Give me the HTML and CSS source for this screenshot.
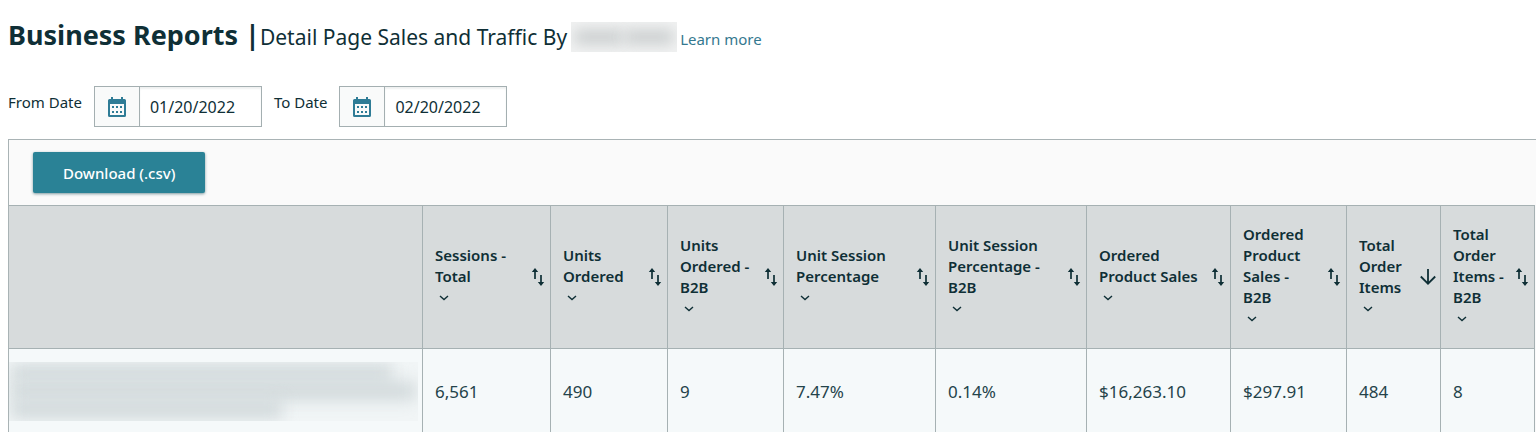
FILE: index.html
```html
<!DOCTYPE html>
<html lang="en">
<head>
<meta charset="utf-8">
<title>Business Reports</title>
<link rel="stylesheet" href="styles.css">
</head>
<body>
<svg class="sprite" aria-hidden="true">
  <symbol id="calendar" viewBox="0 0 20 22">
    <path fill="currentColor" fill-rule="evenodd" d="M4 1h2v2h8V1h2v2h1.500a1.500 1.500 0 0 1 1.500 1.500v15a1.500 1.500 0 0 1-1.500 1.500h-15A1.500 1.500 0 0 1 1 19.500v-15A1.500 1.500 0 0 1 2.500 3H4zM3 8v11h14V8z"/>
    <path fill="currentColor" d="M5 10h2v2H5zM9 10h2v2H9zM13 10h2v2h-2zM5 15h2v2H5zM9 15h2v2H9zM13 15h2v2h-2z"/>
  </symbol>
  <symbol id="sort" viewBox="0 0 14 18">
    <path fill="none" stroke="currentColor" stroke-width="1.700" d="M4 11V2M10 7v9"/>
    <path fill="currentColor" d="M4 0 7.200 4H.8zM10 18l3.200-4H6.800z"/>
  </symbol>
  <symbol id="down" viewBox="0 0 16 16">
    <path fill="none" stroke="currentColor" stroke-width="1.800" d="M8 0v14.500M.8 7.500 8 14.700l7.200-7.200"/>
  </symbol>
  <symbol id="chevron" viewBox="0 0 10 6">
    <path fill="none" stroke="currentColor" stroke-width="1.400" d="M1 1l4 3.600L9 1"/>
  </symbol>
</svg>
<header class="page-head">
  <h1 class="title">Business Reports |</h1>
  <h2 class="subtitle">Detail Page Sales and Traffic By</h2>
  <span class="redacted redacted-title"><i class="smudge"></i><i class="smudge"></i></span>
  <a class="learn" href="#">Learn more</a>
</header>
<form class="filters">
  <label class="filter-label" for="from">From Date</label>
  <div class="date">
    <button class="date-button" type="button" aria-label="Choose from date"><svg class="calendar"><use href="#calendar"/></svg></button>
    <input class="date-input" id="from" type="text" value="01/20/2022">
  </div>
  <label class="filter-label" for="to">To Date</label>
  <div class="date">
    <button class="date-button" type="button" aria-label="Choose to date"><svg class="calendar"><use href="#calendar"/></svg></button>
    <input class="date-input" id="to" type="text" value="02/20/2022">
  </div>
</form>
<main class="panel">
  <div class="toolbar"><button class="download" type="button">Download (.csv)</button></div>
  <table class="report">
    <colgroup>
      <col class="c-name"><col class="c-sessions"><col class="c-units"><col class="c-units-b2b"><col class="c-percent"><col class="c-percent-b2b"><col class="c-sales"><col class="c-sales-b2b"><col class="c-items"><col class="c-items">
    </colgroup>
    <thead>
      <tr>
        <th></th>
        <th><div class="head"><span class="name">Sessions -<br>Total<svg class="chevron"><use href="#chevron"/></svg></span><button class="sorter" type="button" aria-label="Sort"><svg class="sort"><use href="#sort"/></svg></button></div></th>
        <th><div class="head"><span class="name">Units<br>Ordered<svg class="chevron"><use href="#chevron"/></svg></span><button class="sorter" type="button" aria-label="Sort"><svg class="sort"><use href="#sort"/></svg></button></div></th>
        <th><div class="head"><span class="name">Units<br>Ordered -<br>B2B<svg class="chevron"><use href="#chevron"/></svg></span><button class="sorter" type="button" aria-label="Sort"><svg class="sort"><use href="#sort"/></svg></button></div></th>
        <th><div class="head"><span class="name">Unit Session<br>Percentage<svg class="chevron"><use href="#chevron"/></svg></span><button class="sorter" type="button" aria-label="Sort"><svg class="sort"><use href="#sort"/></svg></button></div></th>
        <th><div class="head"><span class="name">Unit Session<br>Percentage -<br>B2B<svg class="chevron"><use href="#chevron"/></svg></span><button class="sorter" type="button" aria-label="Sort"><svg class="sort"><use href="#sort"/></svg></button></div></th>
        <th><div class="head"><span class="name">Ordered<br>Product Sales<svg class="chevron"><use href="#chevron"/></svg></span><button class="sorter" type="button" aria-label="Sort"><svg class="sort"><use href="#sort"/></svg></button></div></th>
        <th><div class="head"><span class="name">Ordered<br>Product<br>Sales -<br>B2B<svg class="chevron"><use href="#chevron"/></svg></span><button class="sorter" type="button" aria-label="Sort"><svg class="sort"><use href="#sort"/></svg></button></div></th>
        <th aria-sort="descending"><div class="head head-sorted"><span class="name">Total<br>Order<br>Items<svg class="chevron"><use href="#chevron"/></svg></span><button class="sorter" type="button" aria-label="Sorted descending"><svg class="down"><use href="#down"/></svg></button></div></th>
        <th><div class="head"><span class="name">Total<br>Order<br>Items -<br>B2B<svg class="chevron"><use href="#chevron"/></svg></span><button class="sorter" type="button" aria-label="Sort"><svg class="sort"><use href="#sort"/></svg></button></div></th>
      </tr>
    </thead>
    <tbody>
      <tr>
        <td class="product"><div class="redacted redacted-product"><i class="line line-a"></i><i class="line line-b"></i><i class="line line-c"></i></div></td>
        <td>6,561</td><td>490</td><td>9</td><td>7.47%</td><td>0.14%</td><td>$16,263.10</td><td>$297.91</td><td>484</td><td>8</td>
      </tr>
    </tbody>
  </table>
</main>
</body>
</html>
```
FILE: styles.css
```css
* { box-sizing: border-box; }
body {
  margin: 0;
  padding-left: 8px;
  height: 100vh;
  display: flex;
  flex-direction: column;
  overflow: hidden;
  background: #fff;
  color: #0f2f36;
  font-family: "Noto Sans", "Open Sans", sans-serif;
  font-size: 15px;
}
button, input { font: inherit; color: inherit; margin: 0; }
.sprite { display: none; }

.page-head {
  display: flex;
  align-items: baseline;
  height: 86px;
  flex: none;
  padding-top: 16px;
  white-space: nowrap;
}
.title { margin: 0; font-size: 27px; font-weight: 700; line-height: 38px; }
.subtitle { margin: 0; font-size: 21px; font-weight: 400; }
.learn { margin-left: 3px; color: #34788f; text-decoration: none; }

.redacted { overflow: hidden; }
.redacted-title {
  display: flex;
  align-self: flex-start;
  gap: 2px;
  width: 106px;
  height: 30px;
  margin: 6px 0 0 4px;
  padding: 8px 4px;
  background: #f1f2f2;
}
.smudge { flex: 1; background: #c9cdce; filter: blur(7px); }

.filters { display: flex; flex: none; margin-bottom: 12px; }
.filter-label { line-height: 33px; margin-right: 12px; white-space: nowrap; }
.date {
  display: flex;
  width: 168px;
  height: 41px;
  margin-right: 12px;
  border: 1px solid #a4afb1;
}
.date-button {
  display: grid;
  place-items: center;
  width: 45px;
  padding: 0;
  border: 0;
  border-right: 1px solid #a4afb1;
  background: #f9fafa;
  color: #2f7c96;
}
.calendar { width: 20px; height: 22px; }
.date-input {
  flex: 1;
  min-width: 0;
  padding: 0 0 0 10px;
  border: 0;
  background: #fff;
  font-size: 16px;
  box-shadow: inset 0 2px 2px #eff1f1;
}

.panel {
  flex: 1;
  min-height: 0;
  overflow: hidden;
  border: 1px solid #a9b3b5;
  border-width: 1px 0 0 1px;
  padding-right: 1px;
  background: #fafafa;
}
.toolbar { padding: 12px 24px; }
.download {
  display: block;
  height: 41px;
  padding: 0 30px;
  border: 0;
  border-radius: 2px;
  background: #2a8296;
  color: #fff;
  font-weight: 500;
  box-shadow: 0 1px 3px #7d999f;
}

.report {
  width: 100%;
  table-layout: fixed;
  border-collapse: separate;
  border-spacing: 0;
}
.c-name { width: 414px; }
.c-sessions { width: 128px; }
.c-units { width: 117px; }
.c-units-b2b { width: 116px; }
.c-percent { width: 152px; }
.c-percent-b2b { width: 151px; }
.c-sales { width: 144px; }
.c-sales-b2b { width: 116px; }
.c-items { width: 94px; }
th {
  height: 144px;
  padding: 0 0 0 12px;
  border: 1px solid #a6b1b3;
  border-width: 1px 1px 1px 0;
  background: #d7dbdc;
  font-weight: 600;
  line-height: 21px;
  text-align: left;
  white-space: nowrap;
}
.head { display: flex; align-items: center; justify-content: space-between; padding-right: 5px; }
.head-sorted { padding-right: 4px; }
.name { flex: 1; }
.chevron { display: block; width: 10px; height: 6px; margin: 8px 0 8px 4px; }
.sorter { flex: none; display: block; padding: 0; border: 0; background: none; }
.sort { display: block; width: 14px; height: 18px; }
.down { display: block; width: 16px; height: 16px; }
td {
  height: 84px;
  padding: 0 0 0 12px;
  border-right: 1px solid #a6b1b3;
  background: #f5f9fa;
  color: #24434a;
  font-size: 17px;
}
.product { padding: 0 4px 0 0; }
.redacted-product {
  display: flex;
  flex-direction: column;
  height: 59px;
  padding: 3px 2px;
  background: #f1f5f6;
}
.line { flex: 1; background: #d0d8da; filter: blur(8px); }
.line-a { width: 94%; }
.line-b { width: 100%; }
.line-c { width: 67%; }
```
